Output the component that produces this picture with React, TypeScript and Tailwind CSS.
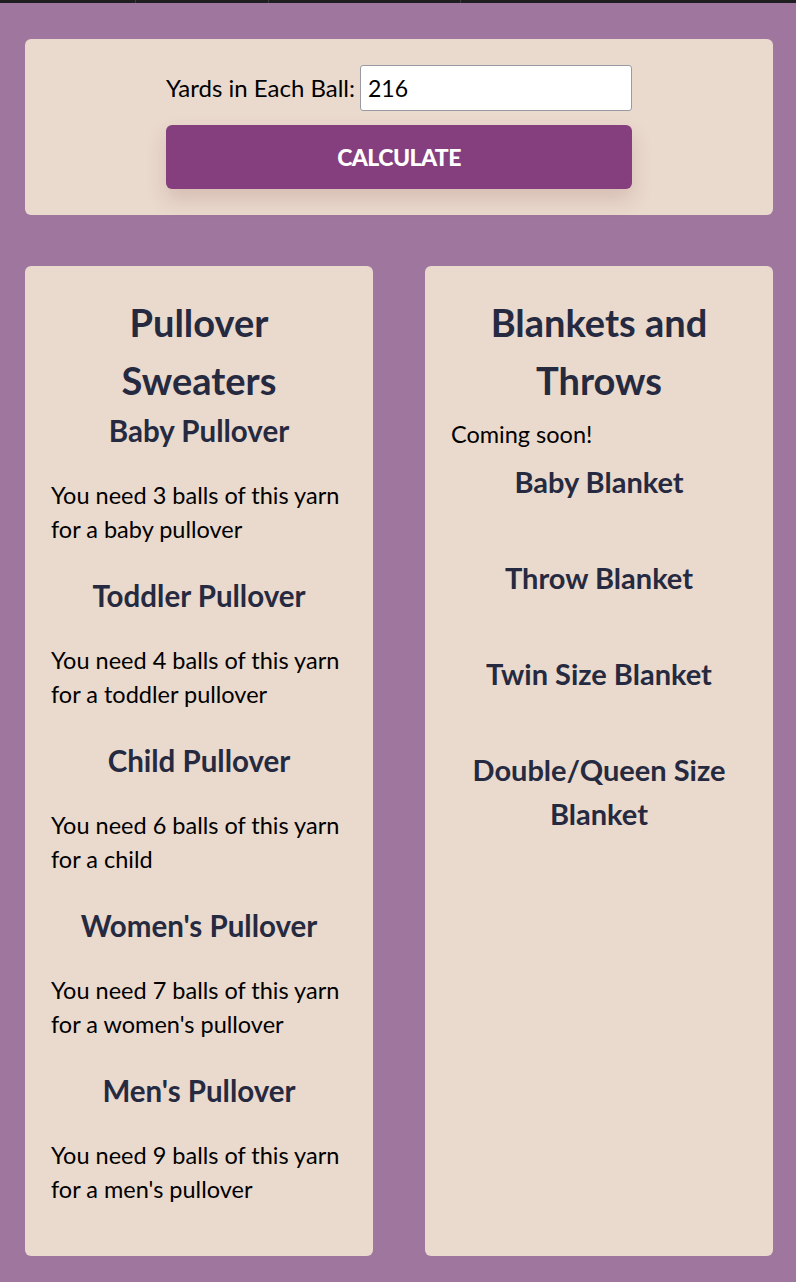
import React from "react";

const sweaters = [
  { title: "Baby Pullover", balls: 3, what: "a baby pullover" },
  { title: "Toddler Pullover", balls: 4, what: "a toddler pullover" },
  { title: "Child Pullover", balls: 6, what: "a child" },
  { title: "Women's Pullover", balls: 7, what: "a women's pullover" },
  { title: "Men's Pullover", balls: 9, what: "a men's pullover" },
];

const blankets = ["Baby Blanket", "Throw Blanket", "Twin Size Blanket", "Double/Queen Size Blanket"];

const font = { fontFamily: "Lato, 'Open Sans', sans-serif" };

export default function App() {
  return (
    <div className="min-h-[1282px] bg-[#9e769e] text-black" style={font}>
      <div className="flex h-[3px] bg-[#1e1e21]">
        <div className="w-[136px] border-r border-[#3b3b3e]" />
        <div className="w-[133px] border-r border-[#3b3b3e]" />
        <div className="w-[192px] border-r border-[#3b3b3e]" />
        <div className="flex-1" />
      </div>

      <div className="pl-[25px] pr-[23px] pt-[36px] pb-[25px]">
        <div className="flex flex-col items-center rounded-md bg-[#ead9cd] py-[26px]">
          <div className="flex w-[466px] flex-col gap-[14px]">
            <div className="flex items-center gap-[5px]">
              <label className="whitespace-nowrap text-[24px]">Yards in Each Ball:</label>
              <input
                defaultValue="216"
                className="h-[46px] min-w-0 flex-1 rounded-[3px] border border-[#9a9aa6] bg-white px-[7px] text-[23px] outline-none"
              />
            </div>
            <button className="h-[64px] w-full rounded-md bg-[#853f7f] text-[23px] font-black uppercase tracking-tight text-white shadow-[0_10px_20px_rgba(120,60,60,0.18)]">
              Calculate
            </button>
          </div>
        </div>

        <div className="mt-[51px] grid grid-cols-2 gap-[52px]">
          <div className="rounded-md bg-[#ead9cd] px-[26px] pt-[27px] pb-[50px] text-[#262a40]">
            <h2 className="text-center text-[38px] font-bold leading-[58px]">
              Pullover
              <br />
              Sweaters
            </h2>
            {sweaters.map((s, i) => (
              <div key={s.title} className={i > 0 ? "mt-[28px]" : ""}>
                <h3 className="text-center text-[29.5px] font-bold leading-[44px]">{s.title}</h3>
                <p className="mt-[25px] text-[23.5px] leading-[34px] text-black">
                  You need {s.balls} balls of this yarn for {s.what}
                </p>
              </div>
            ))}
          </div>

          <div className="rounded-md bg-[#ead9cd] px-[26px] pt-[27px] text-[#262a40]">
            <h2 className="text-center text-[38px] font-bold leading-[58px]">
              Blankets and
              <br />
              Throws
            </h2>
            <p className="mt-[8px] text-[23.5px] leading-[34px] text-black">Coming soon!</p>
            {blankets.map((b, i) => (
              <h3
                key={b}
                className={`px-[10px] text-center text-[29px] font-bold leading-[44px] ${
                  i === 0 ? "mt-[9px]" : "mt-[52px]"
                }`}
              >
                {b}
              </h3>
            ))}
          </div>
        </div>
      </div>
    </div>
  );
}
